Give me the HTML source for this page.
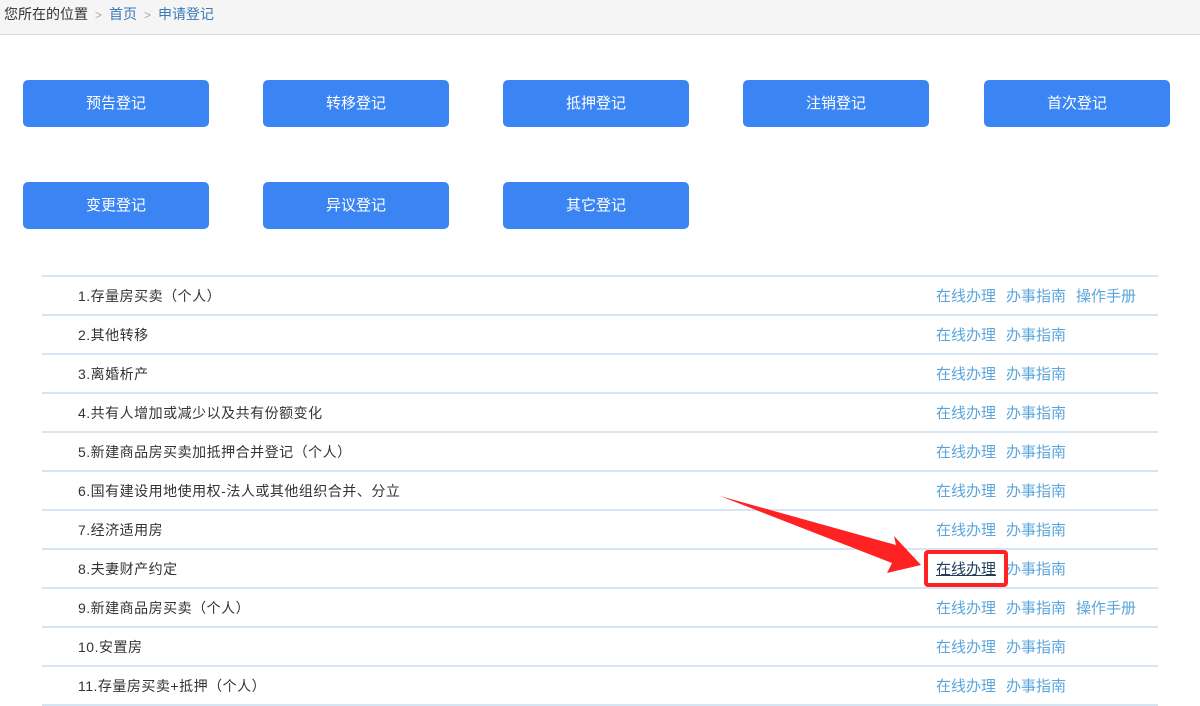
<!DOCTYPE html>
<html><head><meta charset="utf-8"><style>
*{margin:0;padding:0;box-sizing:border-box}
body{width:1200px;height:698px;overflow:hidden;background:#fff;font-family:"Liberation Sans","Noto Sans CJK SC",sans-serif;font-size:14px;position:relative}
.bc{height:35px;background:#f5f5f5;border-bottom:1px solid #c9d9ea;padding:4px 0 0 4px;color:#333;font-size:14px}
.bc span.s{color:#aaa;margin:0 7px;font-size:12px}
.bc a{color:#3a7ab8;text-decoration:none}
.btn{position:absolute;width:186px;height:47px;background:#3b84f4;border-radius:5px;color:#fff;text-align:center;line-height:47px;font-size:15px}
.tbl{position:absolute;left:42px;top:275px;width:1116px;border-top:2px solid #d5e5f3}
.row{height:39px;border-bottom:2px solid #d5e5f3;position:relative;line-height:39px;color:#333}
.row .t{position:absolute;left:36px;letter-spacing:0.5px}
.row .l{position:absolute;left:894px;color:#5aa6dc;font-size:15px}
.row .l span{margin-right:10px}
</style></head><body>
<div class="bc">您所在的位置<span class="s">&gt;</span><a>首页</a><span class="s">&gt;</span><a>申请登记</a></div>
<div class="btn" style="left:23px;top:80px">预告登记</div>
<div class="btn" style="left:263px;top:80px">转移登记</div>
<div class="btn" style="left:503px;top:80px">抵押登记</div>
<div class="btn" style="left:743px;top:80px">注销登记</div>
<div class="btn" style="left:984px;top:80px">首次登记</div>
<div class="btn" style="left:23px;top:182px">变更登记</div>
<div class="btn" style="left:263px;top:182px">异议登记</div>
<div class="btn" style="left:503px;top:182px">其它登记</div>
<div class="tbl">
<div class="row"><span class="t">1.存量房买卖（个人）</span><span class="l"><span>在线办理</span><span>办事指南</span><span>操作手册</span></span></div>
<div class="row"><span class="t">2.其他转移</span><span class="l"><span>在线办理</span><span>办事指南</span></span></div>
<div class="row"><span class="t">3.离婚析产</span><span class="l"><span>在线办理</span><span>办事指南</span></span></div>
<div class="row"><span class="t">4.共有人增加或减少以及共有份额变化</span><span class="l"><span>在线办理</span><span>办事指南</span></span></div>
<div class="row"><span class="t">5.新建商品房买卖加抵押合并登记（个人）</span><span class="l"><span>在线办理</span><span>办事指南</span></span></div>
<div class="row"><span class="t">6.国有建设用地使用权-法人或其他组织合并、分立</span><span class="l"><span>在线办理</span><span>办事指南</span></span></div>
<div class="row"><span class="t">7.经济适用房</span><span class="l"><span>在线办理</span><span>办事指南</span></span></div>
<div class="row"><span class="t">8.夫妻财产约定</span><span class="l"><span style="color:#1f3d5a;text-decoration:underline">在线办理</span><span>办事指南</span></span></div>
<div class="row"><span class="t">9.新建商品房买卖（个人）</span><span class="l"><span>在线办理</span><span>办事指南</span><span>操作手册</span></span></div>
<div class="row"><span class="t">10.安置房</span><span class="l"><span>在线办理</span><span>办事指南</span></span></div>
<div class="row"><span class="t">11.存量房买卖+抵押（个人）</span><span class="l"><span>在线办理</span><span>办事指南</span></span></div>
</div>
<div style="position:absolute;left:924px;top:550px;width:84px;height:37px;border:4px solid #f22;border-radius:4px"></div>
<svg style="position:absolute;left:0;top:0" width="1200" height="698"><polygon points="720,496 896,545 894,536 921,565 887,573 892,563" fill="#f22"/></svg>
</body></html>
